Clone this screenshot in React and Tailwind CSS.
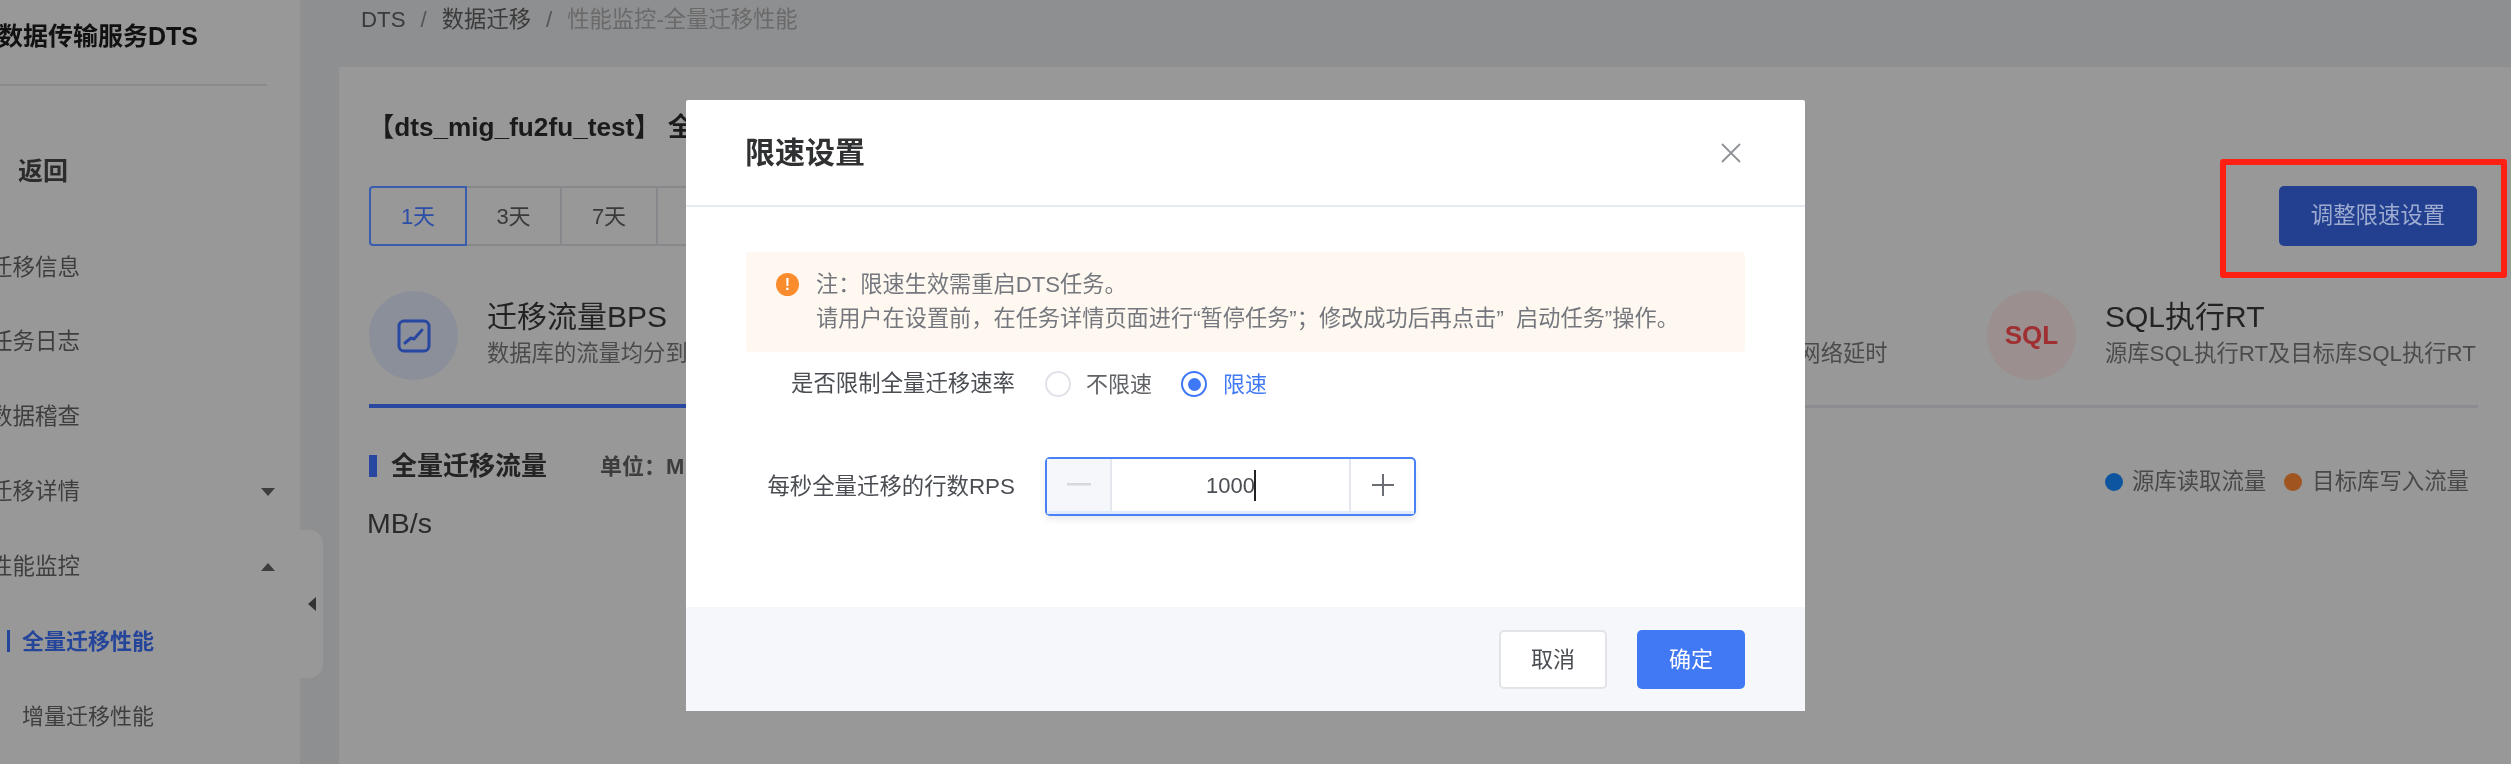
import React from "react";

const font = "font-['Liberation_Sans','Noto_Sans_CJK_SC',sans-serif]";

function Caret({ up }) {
  return (
    <svg width="16" height="10" viewBox="0 0 16 10" className="absolute left-[260px]">
      <path d={up ? "M8 1 L15 9 L1 9 Z" : "M1 1 L15 1 L8 9 Z"} fill="#3d3d3d" />
    </svg>
  );
}

function SideItem({ children, caret, up }) {
  return (
    <div className="relative flex items-center h-[74.8px] text-[22.5px] text-[#3e3e3e] whitespace-nowrap">
      <span className="ml-[-10px]">{children}</span>
      {caret && <Caret up={up} />}
    </div>
  );
}

function Sidebar() {
  return (
    <aside className="relative w-[300px] shrink-0 bg-[#989898]">
      <div className="flex items-center h-[86px] w-[267px] border-b-2 border-[#898a8e] pb-[10px]">
        <span className="ml-[-2px] text-[25px] font-bold text-[#111] whitespace-nowrap">数据传输服务DTS</span>
      </div>
      <div className="flex items-center h-[98px] pb-[17px] pl-[18px] mt-[45px]">
        <span className="text-[25px] font-bold text-[#2c2c2c]">返回</span>
      </div>
      <div className="mt-[1px]">
        <SideItem>迁移信息</SideItem>
        <SideItem>任务日志</SideItem>
        <SideItem>数据稽查</SideItem>
        <SideItem caret>迁移详情</SideItem>
        <SideItem caret up>性能监控</SideItem>
        <div className="flex items-center h-[74.8px] pl-[7px] text-[22px] font-bold text-[#25459b]">
          <span className="w-[3px] h-[22px] bg-[#25459b] mr-[12px]" />
          全量迁移性能
        </div>
        <div className="flex items-center h-[74.8px] pl-[22px] text-[22px] text-[#3e3e3e]">增量迁移性能</div>
      </div>
      <div className="absolute left-[300px] top-[530px] w-[23px] h-[148px] rounded-r-[14px] bg-[#989898] flex items-center justify-center z-10">
        <svg width="10" height="16" viewBox="0 0 10 16"><path d="M9 1 V15 L1 8 Z" fill="#333" /></svg>
      </div>
    </aside>
  );
}

function Metric({ title, desc, icon, bg }) {
  return (
    <div className="flex items-start w-[404.5px] shrink-0">
      <div className={`w-[89px] h-[89px] rounded-full flex items-center justify-center shrink-0 ${bg}`}>{icon}</div>
      <div className="ml-[29px] whitespace-nowrap">
        <div className="h-[40px] text-[30px] leading-[40px] mt-[6px] text-[#232323]">{title}</div>
        <div className="text-[22.3px] leading-[30px] mt-[2px] text-[#4b4b4b]">{desc}</div>
      </div>
    </div>
  );
}

function Main() {
  return (
    <main className="flex-1 min-w-0 bg-[#8e8f91] pl-[39px]">
      <nav className="flex items-center h-[39px] pl-[22px] text-[22.3px] whitespace-nowrap text-[#3a3a3a]">
        <span>DTS</span>
        <span className="mx-[15px] text-[#555]">/</span>
        <span>数据迁移</span>
        <span className="mx-[15px] text-[#555]">/</span>
        <span className="text-[#6a6a6a]">性能监控-全量迁移性能</span>
      </nav>
      <section className="mt-[28px] h-[697px] bg-[#989898] pl-[30px]">
        <div className="flex items-center h-[119px] pt-[2px]">
          <h1 className="ml-[-1px] text-[26.2px] font-bold text-[#1b1b1b] whitespace-nowrap">【dts_mig_fu2fu_test】 全</h1>
        </div>
        <div className="flex text-[22px] h-[60px] w-[800px]">
          <div className="w-[98px] flex items-center justify-center border-2 border-[#3a5db0] rounded-l-[4px] text-[#2c4ea8]">1天</div>
          <div className="w-[95px] flex items-center justify-center border-y-2 border-r-2 border-[#87888b] text-[#3a3a3a]">3天</div>
          <div className="w-[96px] flex items-center justify-center border-y-2 border-r-2 border-[#87888b] text-[#3a3a3a]">7天</div>
          <div className="w-[96px] border-y-2 border-r-2 border-[#87888b]" />
        </div>
        <div className="flex mt-[45px] h-[117px] w-[2109px] border-b-[3px] border-[#8b8c90] relative">
          <Metric
            title="迁移流量BPS"
            desc="数据库的流量均分到各"
            bg="bg-[#8a8f9a]"
            icon={
              <svg width="34" height="34" viewBox="0 0 34 34" fill="none" stroke="#2747a0" strokeWidth="3">
                <rect x="2" y="2" width="30" height="30" rx="5" />
                <path d="M8 24 L14 19 L17 20 L25 11" strokeLinecap="round" strokeLinejoin="round" />
              </svg>
            }
          />
          <div className="w-[809px] shrink-0" />
          <Metric title="" desc="目标库DB网络延时" bg="bg-[#8a8f9a]" />
          <Metric
            title="SQL执行RT"
            desc="源库SQL执行RT及目标库SQL执行RT"
            bg="bg-[#9b8f8f]"
            icon={<span className="text-[26px] font-bold text-[#a02f32]">SQL</span>}
          />
          <div className="absolute left-0 bottom-[-3px] w-[640px] h-[4px] bg-[#2747a0]" />
        </div>
        <div className="flex items-center mt-[46px] h-[24px] w-[2109px] whitespace-nowrap">
          <span className="w-[8px] h-[22px] bg-[#2747a0]" />
          <span className="ml-[14px] text-[26px] font-bold text-[#242424]">全量迁移流量</span>
          <span className="ml-[53px] text-[22px] font-bold text-[#3d3d3d]">单位：M</span>
          <div className="ml-auto flex items-center text-[22.4px] text-[#484848] mr-[9px] mt-[32px]">
            <span className="w-[18px] h-[18px] rounded-full bg-[#0e55a0] ml-[-1px]" />
            <span className="ml-[9px]">源库读取流量</span>
            <span className="ml-[18px] w-[18px] h-[18px] rounded-full bg-[#a05520]" />
            <span className="ml-[10px]">目标库写入流量</span>
          </div>
        </div>
        <div className="mt-[24px] ml-[-2px] text-[28.5px] text-[#2a2a2a]">MB/s</div>
      </section>
    </main>
  );
}

function Radio({ checked, children }) {
  return (
    <label className={`flex items-center text-[22px] ${checked ? "text-[#4179f5]" : "text-[#606266]"}`}>
      <span
        className={`w-[26px] h-[26px] rounded-full flex items-center justify-center border-2 bg-white ${
          checked ? "border-[#3f78f6]" : "border-[#dfe2e8]"
        }`}
      >
        {checked && <span className="w-[13px] h-[13px] rounded-full bg-[#3f78f6]" />}
      </span>
      <span className={checked ? "ml-[16px]" : "ml-[15px]"}>{children}</span>
    </label>
  );
}

function Modal() {
  return (
    <div className="absolute left-[686px] top-[100px] z-20 w-[1119px] h-[611px] bg-white flex flex-col rounded-[2px]">
      <header className="flex items-center justify-between h-[107px] border-b-2 border-[#e6eaf2] pl-[59px] pr-[63px] shrink-0">
        <h2 className="text-[30px] font-bold text-[#303133]">限速设置</h2>
        <svg width="22" height="22" viewBox="0 0 22 22" stroke="#8f9399" strokeWidth="1.8" fill="none">
          <path d="M2 2 L20 20 M20 2 L2 20" />
        </svg>
      </header>
      <div className="flex-1 px-[60px] pt-[45px]">
        <div className="h-[100px] w-[999px] rounded-[4px] bg-[#fef8f0] pl-[30px] flex">
          <span className="mt-[21px] w-[23px] h-[23px] rounded-full bg-[#fa8c2e] text-white text-[16px] leading-[23px] text-center font-bold shrink-0">!</span>
          <div className="ml-[17px] mt-[16px] text-[22.2px] leading-[34px] text-[#74777d] whitespace-nowrap">
            <div>注：限速生效需重启DTS任务。</div>
            <div>请用户在设置前，在任务详情页面进行“暂停任务”；修改成功后再点击”&nbsp; 启动任务”操作。</div>
          </div>
        </div>
        <div className="flex items-center h-[64px]">
          <span className="w-[269px] text-right text-[22.4px] text-[#4a4d52] whitespace-nowrap">是否限制全量迁移速率</span>
          <div className="ml-[30px] flex items-center gap-[29px]">
            <Radio>不限速</Radio>
            <Radio checked>限速</Radio>
          </div>
        </div>
        <div className="flex items-center mt-[41px]">
          <span className="w-[269px] text-right text-[22.4px] text-[#4a4d52] whitespace-nowrap">每秒全量迁移的行数RPS</span>
          <div className="ml-[30px] flex w-[371px] h-[59px] border-2 border-[#4a80f6] rounded-[5px] shadow-[0_4px_6px_rgba(0,0,0,0.08)]">
            <div className="w-[65px] bg-[#f5f7fa] border-r-2 border-b-[3px] border-r-[#e4e7ed] border-b-[#e2ebfd] flex items-center justify-center">
              <svg width="24" height="4" viewBox="0 0 24 4"><rect width="24" height="2.5" fill="#d5d8de" /></svg>
            </div>
            <div className="flex-1 flex items-center justify-center text-[22px] text-[#4a4d52] border-b-[3px] border-[#e2ebfd]">
              <span className="relative">
                1000
                <span className="absolute right-[-1px] top-[1px] bottom-[1px] w-[2px] bg-[#222]" />
              </span>
            </div>
            <div className="w-[65px] border-l-2 border-b-[3px] border-l-[#e4e7ed] border-b-[#e2ebfd] flex items-center justify-center">
              <svg width="24" height="24" viewBox="0 0 24 24" stroke="#6a6d73" strokeWidth="2"><path d="M12 1 V23 M1 12 H23" /></svg>
            </div>
          </div>
        </div>
      </div>
      <footer className="h-[104px] shrink-0 bg-[#f5f7fa] flex items-center justify-end gap-[30px] pr-[60px] text-[22px]">
        <button className="w-[108px] h-[59px] rounded-[5px] border-2 border-[#e2e4e8] bg-white text-[#4a4d52]">取消</button>
        <button className="w-[108px] h-[59px] rounded-[5px] bg-[#4179f5] text-white">确定</button>
      </footer>
    </div>
  );
}

export default function App() {
  return (
    <div className={`${font} relative flex w-[2511px] h-[764px] overflow-hidden bg-[#989898] blur-[0.7px]`}>
      <Sidebar />
      <Main />
      <div className="absolute left-[2279px] top-[186px] w-[198px] h-[60px] rounded-[5px] bg-[#234090] text-[#9dabd0] text-[22.4px] flex items-center justify-center">
        调整限速设置
      </div>
      <div className="absolute left-[2220px] top-[159px] w-[287px] h-[119px] border-[6px] border-[#ff2014] rounded-[3px] z-30" />
      <Modal />
    </div>
  );
}
